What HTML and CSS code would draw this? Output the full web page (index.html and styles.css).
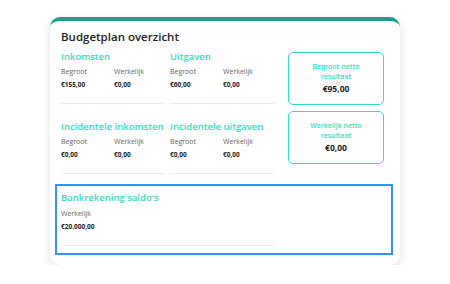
FILE: index.html
```html
<!DOCTYPE html>
<html lang="nl">
<head>
    <meta charset="UTF-8">
    <meta name="viewport" content="width=device-width, initial-scale=1.0">
    <title>Budgetplan overzicht</title>
    <link rel="stylesheet" href="styles.css">
</head>
<body>

    <div class="card">
        <h2 class="card-title">Budgetplan overzicht</h2>

        <div class="overview">
            <div class="sections">
                <div class="section">
                    <h3>Inkomsten</h3>
                    <div class="figures">
                        <span class="label">Begroot</span>
                        <span class="label">Werkelijk</span>
                        <span class="value">€155,00</span>
                        <span class="value">€0,00</span>
                    </div>
                </div>
                <div class="section">
                    <h3>Uitgaven</h3>
                    <div class="figures">
                        <span class="label">Begroot</span>
                        <span class="label">Werkelijk</span>
                        <span class="value">€60,00</span>
                        <span class="value">€0,00</span>
                    </div>
                </div>
                <div class="section">
                    <h3>Incidentele inkomsten</h3>
                    <div class="figures">
                        <span class="label">Begroot</span>
                        <span class="label">Werkelijk</span>
                        <span class="value">€0,00</span>
                        <span class="value">€0,00</span>
                    </div>
                </div>
                <div class="section">
                    <h3>Incidentele uitgaven</h3>
                    <div class="figures">
                        <span class="label">Begroot</span>
                        <span class="label">Werkelijk</span>
                        <span class="value">€0,00</span>
                        <span class="value">€0,00</span>
                    </div>
                </div>
            </div>

            <div class="results">
                <div class="result">
                    <span class="result-title">Begroot netto<br>resultaat</span>
                    <span class="result-value">€95,00</span>
                </div>
                <div class="result">
                    <span class="result-title">Werkelijk netto<br>resultaat</span>
                    <span class="result-value">€0,00</span>
                </div>
            </div>
        </div>

        <div class="bank">
            <div class="section bank-section">
                <h3>Bankrekening saldo's</h3>
                <span class="label">Werkelijk</span>
                <span class="value">€20.000,00</span>
            </div>
        </div>
    </div>

</body>
</html>
```

FILE: styles.css
```css
body {
    font-family: "Open Sans", sans-serif;
    background-color: #fff;
    margin: 0;
    padding: 17px 50px 0 50px;
    color: #222;
}
.card {
    width: 350px;
    height: 248px;
    box-sizing: border-box;
    padding: 0 7px 0 5px;
    background-color: #fff;
    border-top: 4px solid #1f9e8b;
    border-radius: 10px;
    box-shadow: 0 4px 12px rgba(0, 0, 0, 0.12);
}
.card-title {
    margin: 7px 0 4px 6px;
    font-size: 11.5px;
    line-height: 18px;
    font-weight: 600;
    color: #222;
}
.overview {
    display: flex;
    gap: 14px;
    padding: 0 9px 0 6px;
}
.sections {
    display: grid;
    grid-template-columns: 104px 104px;
    column-gap: 5px;
    row-gap: 16px;
}
.section {
    padding-bottom: 13px;
    border-bottom: 1px solid #ececec;
}
.section h3 {
    margin: 0 0 3px 0;
    font-size: 9.5px;
    line-height: 14px;
    font-weight: 600;
    color: #35dcbf;
    white-space: nowrap;
}
.figures {
    display: grid;
    grid-template-columns: 53px 51px;
    row-gap: 3px;
}
.label {
    display: block;
    font-size: 7px;
    line-height: 10px;
    color: #666;
}
.value {
    display: block;
    font-size: 6.5px;
    line-height: 10px;
    font-weight: 700;
    color: #222;
}
.results {
    display: flex;
    flex-direction: column;
    gap: 6px;
    padding-top: 2px;
}
.result {
    width: 96px;
    height: 53px;
    box-sizing: border-box;
    display: flex;
    flex-direction: column;
    align-items: center;
    justify-content: center;
    text-align: center;
    border: 1px solid #3ad9c6;
    border-radius: 5px;
}
.result-title {
    font-size: 7px;
    line-height: 10px;
    font-weight: 600;
    color: #35dcbf;
}
.result-value {
    margin-top: 1px;
    font-size: 8.5px;
    line-height: 12px;
    font-weight: 700;
    color: #222;
}
.bank {
    margin-top: 10px;
    height: 71px;
    box-sizing: border-box;
    padding: 5px 4px 0 4px;
    border: 2px solid #3a8ef6;
}
.bank-section {
    width: 213px;
}
.bank-section .label {
    margin-top: 4px;
}
.bank-section .value {
    margin-top: 3px;
}
```
